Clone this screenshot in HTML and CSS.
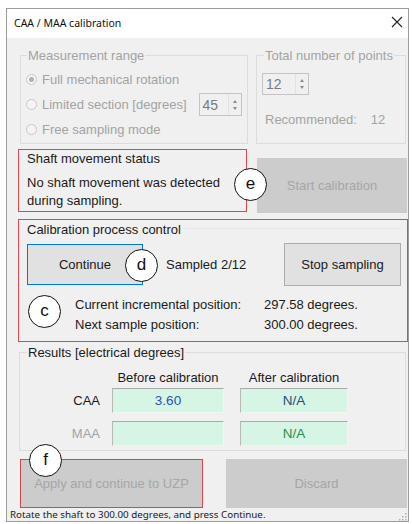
FILE: index.html
```html
<!DOCTYPE html>
<html>
<head>
<meta charset="utf-8">
<link rel="stylesheet" href="styles.css">
</head>
<body>
<div class="window">
  <div class="titlebar">
    <span class="title">CAA / MAA calibration</span>
    <svg class="close" width="12" height="12" viewBox="0 0 12 12"><path d="M1 1 L11 11 M11 1 L1 11" stroke="#222" stroke-width="1.1" fill="none"/></svg>
  </div>
  <div class="client">
    <div class="row row1">
      <div class="group g-measure">
        <div class="glabel dis">Measurement range</div>
        <div class="radio-row dis"><span class="radio checked"></span><span>Full mechanical rotation</span></div>
        <div class="radio-row dis"><span class="radio"></span><span>Limited section [degrees]</span>
          <div class="spin spin45"><span class="spin-val">45</span><span class="spin-btns"><span class="arr up"></span><span class="arr down"></span></span></div>
        </div>
        <div class="radio-row dis"><span class="radio"></span><span>Free sampling mode</span></div>
      </div>
      <div class="group g-total">
        <div class="glabel dis">Total number of points</div>
        <div class="spin spin12"><span class="spin-val">12</span><span class="spin-btns"><span class="arr up"></span><span class="arr down"></span></span></div>
        <div class="recommended dis"><span>Recommended:</span><span>12</span></div>
      </div>
    </div>

    <div class="row row2">
      <div class="redbox shaft">
        <div class="blabel">Shaft movement status</div>
        <div class="shaft-text">No shaft movement was detected<br>during sampling.</div>
      </div>
      <div class="btn disabled start">Start calibration</div>
    </div>

    <div class="redbox calib">
      <div class="blabel calib-label"><span>Calibration process control</span><span class="gline"></span></div>
      <div class="calib-btns">
        <div class="btn active continue">Continue</div>
        <span class="sampled">Sampled 2/12</span>
        <div class="btn stop">Stop sampling</div>
      </div>
      <div class="positions">
        <span>Current incremental position:</span><span>297.58 degrees.</span>
        <span>Next sample position:</span><span>300.00 degrees.</span>
      </div>
    </div>

    <div class="group g-results">
      <div class="glabel">Results [electrical degrees]</div>
      <div class="rrow rhead">
        <span></span><span class="hdr">Before calibration</span><span class="hdr">After calibration</span>
      </div>
      <div class="rrow rcaa">
        <span class="rlabel">CAA</span><span class="val blue">3.60</span><span class="val navy">N/A</span>
      </div>
      <div class="rrow rmaa">
        <span class="rlabel dis">MAA</span><span class="val"></span><span class="val green">N/A</span>
      </div>
    </div>

    <div class="row row5">
      <div class="btn disabled apply">Apply and continue to UZP</div>
      <div class="btn disabled discard">Discard</div>
    </div>

    <div class="statusbar">
      <span>Rotate the shaft to 300.00 degrees, and press Continue.</span>
      <svg class="grip" width="10" height="10" viewBox="0 0 10 10" fill="#b0b0b0"><rect x="8" y="2" width="1.5" height="1.5"/><rect x="5" y="5" width="1.5" height="1.5"/><rect x="8" y="5" width="1.5" height="1.5"/><rect x="2" y="8" width="1.5" height="1.5"/><rect x="5" y="8" width="1.5" height="1.5"/><rect x="8" y="8" width="1.5" height="1.5"/></svg>
    </div>

    <span class="mark mark-e">e</span>
    <span class="mark mark-d">d</span>
    <span class="mark mark-c">c</span>
    <span class="mark mark-f">f</span>
  </div>
</div>
</body>
</html>
```
FILE: styles.css
```css
* { box-sizing: border-box; }
html, body { margin: 0; padding: 0; background: #ffffff; }
body {
  font-family: "Liberation Sans", Arial, sans-serif;
  font-size: 13px;
  color: #1a1a1a;
  width: 412px;
  height: 524px;
  overflow: hidden;
}
.window {
  margin: 8px 0 0 6px;
  width: 403px;
  height: 514px;
  border: 1px solid #9c9c9c;
  display: flex;
  flex-direction: column;
  background: #f0f0f0;
}
.titlebar {
  height: 29px;
  background: #ffffff;
  display: flex;
  align-items: center;
  justify-content: space-between;
  padding: 0 5px 0 7px;
  flex: none;
}
.title {
  font-family: "Noto Sans", "Open Sans", sans-serif;
  font-size: 10.5px;
  color: #111;
  margin-top: -2px;
}
.close { margin-top: -3px; }
.client {
  position: relative;
  flex: 1;
  display: flex;
  flex-direction: column;
}
.row { display: flex; }
.dis { color: #a3a3a3; }

.group {
  border: 1px solid #dcdcdc;
}
.glabel {
  margin-top: -8px;
  height: 16px;
  line-height: 16px;
  background: #f0f0f0;
  align-self: flex-start;
  padding: 0 1px;
}
.row1 { margin-top: 17px; }
.g-measure {
  margin-left: 13px;
  width: 228px;
  height: 89px;
  padding: 0 4px 0 5px;
  display: flex;
  flex-direction: column;
}
.g-measure .glabel { margin-left: 1px; margin-bottom: 3px; }
.radio-row {
  height: 25px;
  display: flex;
  align-items: center;
}
.radio {
  width: 11px;
  height: 11px;
  border-radius: 50%;
  border: 1px solid #c8c8c8;
  background: #f4f4f4;
  margin-right: 5px;
  flex: none;
  display: flex;
  align-items: center;
  justify-content: center;
}
.radio.checked::after {
  content: "";
  width: 5px;
  height: 5px;
  border-radius: 50%;
  background: #b0b0b0;
}
.spin {
  border: 1px solid #c4c4c4;
  background: #f0f0f0;
  display: flex;
  align-items: center;
  color: #7a7a7a;
}
.spin-val { flex: 1; padding-left: 3px; font-size: 14px; }
.spin-btns {
  width: 13px;
  height: 100%;
  display: flex;
  flex-direction: column;
  justify-content: center;
  align-items: center;
  gap: 4px;
  border-left: 1px solid #e2e2e2;
}
.arr { width: 0; height: 0; border-left: 2.5px solid transparent; border-right: 2.5px solid transparent; }
.arr.up { border-bottom: 3px solid #8a8a8a; }
.arr.down { border-top: 3px solid #8a8a8a; }
.spin45 { width: 43px; height: 23px; margin-left: 12px; }
.g-total {
  margin-left: 8px;
  width: 150px;
  height: 89px;
  padding: 0 5px 0 5px;
  display: flex;
  flex-direction: column;
}
.g-total .glabel { margin-left: 2px; }
.spin12 { width: 47px; height: 22px; margin-top: 9px; }
.recommended {
  margin-top: 17px;
  height: 16px;
  line-height: 16px;
  display: flex;
  padding-left: 3px;
}
.recommended span:last-child { margin-left: 14px; }

.redbox { border: 1px solid #e0464c; }
.row2 { margin-top: 5px; height: 64px; align-items: flex-start; }
.shaft {
  margin-left: 11px;
  width: 229px;
  height: 63px;
  padding: 0 0 0 8px;
}
.blabel { height: 16px; line-height: 16px; margin-top: 1px; }
.shaft-text { margin-top: 7px; line-height: 18px; }
.btn {
  display: flex;
  align-items: center;
  justify-content: center;
  background: #e1e1e1;
  border: 1px solid #adadad;
}
.btn.disabled { background: #cccccc; border-color: #cccccc; color: #a6a6a6; }
.start { margin-left: 10px; margin-top: 9px; width: 150px; height: 55px; }

.calib {
  margin-top: 6px;
  margin-left: 11px;
  width: 390px;
  height: 123px;
  padding: 2px 6px 0 8px;
}
.calib-label { display: flex; align-items: center; margin-top: 0; }
.gline { flex: 1; height: 1px; background: #e4e4e4; margin-left: 4px; margin-top: -3px; }
.calib-btns {
  margin-top: 5px;
  height: 43px;
  display: flex;
  align-items: center;
}
.btn.continue { width: 116px; height: 41px; border-color: #0078d7; }
.sampled { margin-left: 23px; }
.stop { margin-left: auto; width: 117px; height: 43px; }
.positions {
  margin-top: 9px;
  display: grid;
  grid-template-columns: 189px auto;
  line-height: 20px;
  padding-left: 48px;
}

.g-results {
  margin-top: 10px;
  margin-left: 12px;
  width: 387px;
  height: 99px;
  display: flex;
  flex-direction: column;
  padding-left: 7px;
}
.rrow {
  margin-left: -7px;
  display: grid;
  grid-template-columns: 80px 112px 112px;
  column-gap: 12px;
}
.rrow > span:nth-child(3) { margin-left: 4px; }
.rhead { margin-top: 9px; height: 16px; line-height: 16px; }
.rcaa { margin-top: 2px; height: 25px; }
.rmaa { margin-top: 8px; height: 25px; }
.hdr { text-align: center; }
.rlabel { text-align: right; line-height: 25px; }
.val {
  background: #d6f5e4;
  border-top: 1px solid #a9a9a9;
  border-left: 1px solid #b8b8b8;
  border-right: 1px solid #eef9f2;
  border-bottom: 1px solid #eef9f2;
  text-align: center;
  line-height: 23px;
  font-size: 13.5px;
}
.blue { color: #2d52b8; }
.navy { color: #1f4f7a; }
.green { color: #2f8a50; }

.row5 { margin-top: 8px; height: 49px; }
.btn.apply { margin-left: 13px; width: 183px; height: 49px; border-color: #d9454b; }
.discard { margin-left: 23px; width: 181px; height: 49px; }

.statusbar {
  height: 13px;
  display: flex;
  align-items: center;
  justify-content: space-between;
  padding: 0 1px 0 3px;
  font-family: "Noto Sans", "Open Sans", sans-serif;
  font-size: 9.8px;
  color: #1a1a1a;
}
.grip { margin-top: 2px; }

.mark {
  position: absolute;
  width: 33px;
  height: 33px;
  border: 1px solid #111;
  border-radius: 50%;
  background: #ffffff;
  display: flex;
  align-items: center;
  justify-content: center;
  font-family: "Liberation Sans", Arial, sans-serif;
  font-size: 17px;
  color: #111;
  padding-bottom: 2px;
}
.mark-e { left: 227px; top: 130px; }
.mark-d { left: 118px; top: 211px; }
.mark-c { left: 21px; top: 257px; }
.mark-f { left: 22px; top: 406px; }
```
